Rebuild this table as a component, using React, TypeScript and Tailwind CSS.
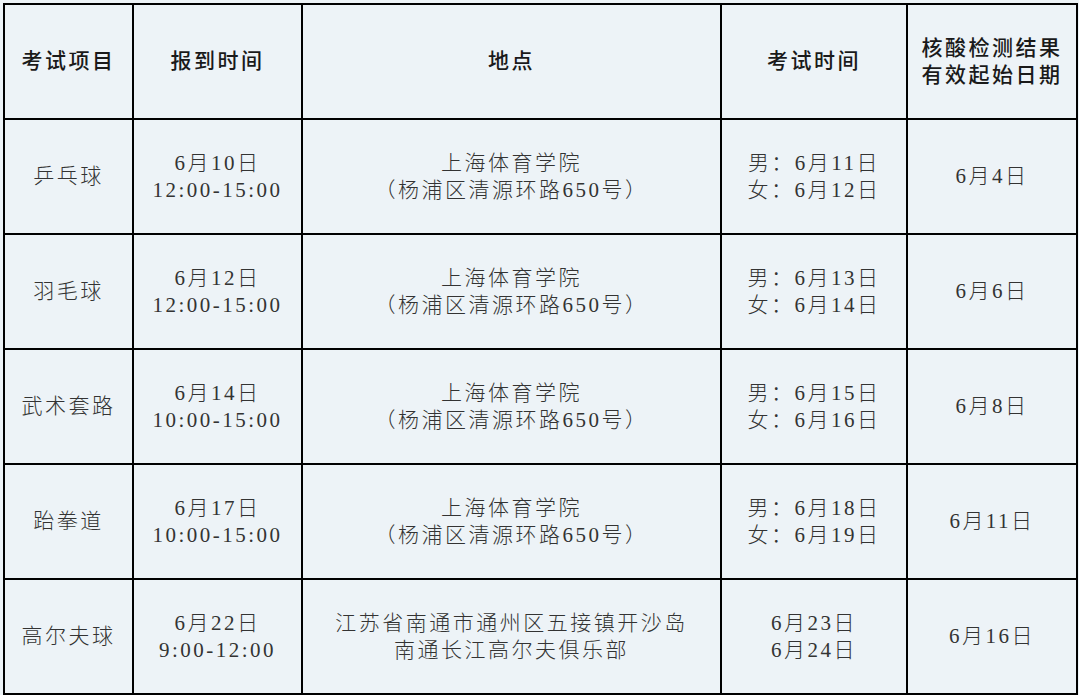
const HEADERS = ['考试项目', '报到时间', '地点', '考试时间', '核酸检测结果\n有效起始日期'];

const ROWS = [
  ['乒乓球', '6月10日\n12:00-15:00', '上海体育学院\n（杨浦区清源环路650号）', '男：6月11日\n女：6月12日', '6月4日'],
  ['羽毛球', '6月12日\n12:00-15:00', '上海体育学院\n（杨浦区清源环路650号）', '男：6月13日\n女：6月14日', '6月6日'],
  ['武术套路', '6月14日\n10:00-15:00', '上海体育学院\n（杨浦区清源环路650号）', '男：6月15日\n女：6月16日', '6月8日'],
  ['跆拳道', '6月17日\n10:00-15:00', '上海体育学院\n（杨浦区清源环路650号）', '男：6月18日\n女：6月19日', '6月11日'],
  ['高尔夫球', '6月22日\n9:00-12:00', '江苏省南通市通州区五接镇开沙岛\n南通长江高尔夫俱乐部', '6月23日\n6月24日', '6月16日'],
];

const WIDTHS = ['w-[129px]', 'w-[169px]', 'w-[419px]', 'w-[186px]', 'w-[170px]'];

function Lines({ text }: { text: string }) {
  return (
    <>
      {text.split('\n').map((line) => (
        <div key={line}>{line}</div>
      ))}
    </>
  );
}

export default function App() {
  return (
    <div className="min-h-[695px] w-[1079px] bg-[#edf3f7] pl-[3px] pt-[3px] font-['Liberation_Serif','Noto_Sans_CJK_SC',serif]">
      <table className="table-fixed border-collapse border-2 border-black w-[1073px]">
        <colgroup>
          {WIDTHS.map((w) => (
            <col key={w} className={w} />
          ))}
        </colgroup>
        <thead>
          <tr className="h-[115px]">
            {HEADERS.map((h) => (
              <th
                key={h}
                className="border-2 border-black p-0 text-center align-middle text-[21px] font-medium leading-[27px] tracking-[2.5px] text-[#1a1a1a]"
              >
                <Lines text={h} />
              </th>
            ))}
          </tr>
        </thead>
        <tbody>
          {ROWS.map((row) => (
            <tr key={row[0]} className="h-[115px]">
              {row.map((cell, i) => (
                <td
                  key={i}
                  className="border-2 border-black p-0 text-center align-middle text-[21px] font-light leading-[27px] tracking-[2.5px] text-[#333]"
                >
                  <Lines text={cell} />
                </td>
              ))}
            </tr>
          ))}
        </tbody>
      </table>
    </div>
  );
}
